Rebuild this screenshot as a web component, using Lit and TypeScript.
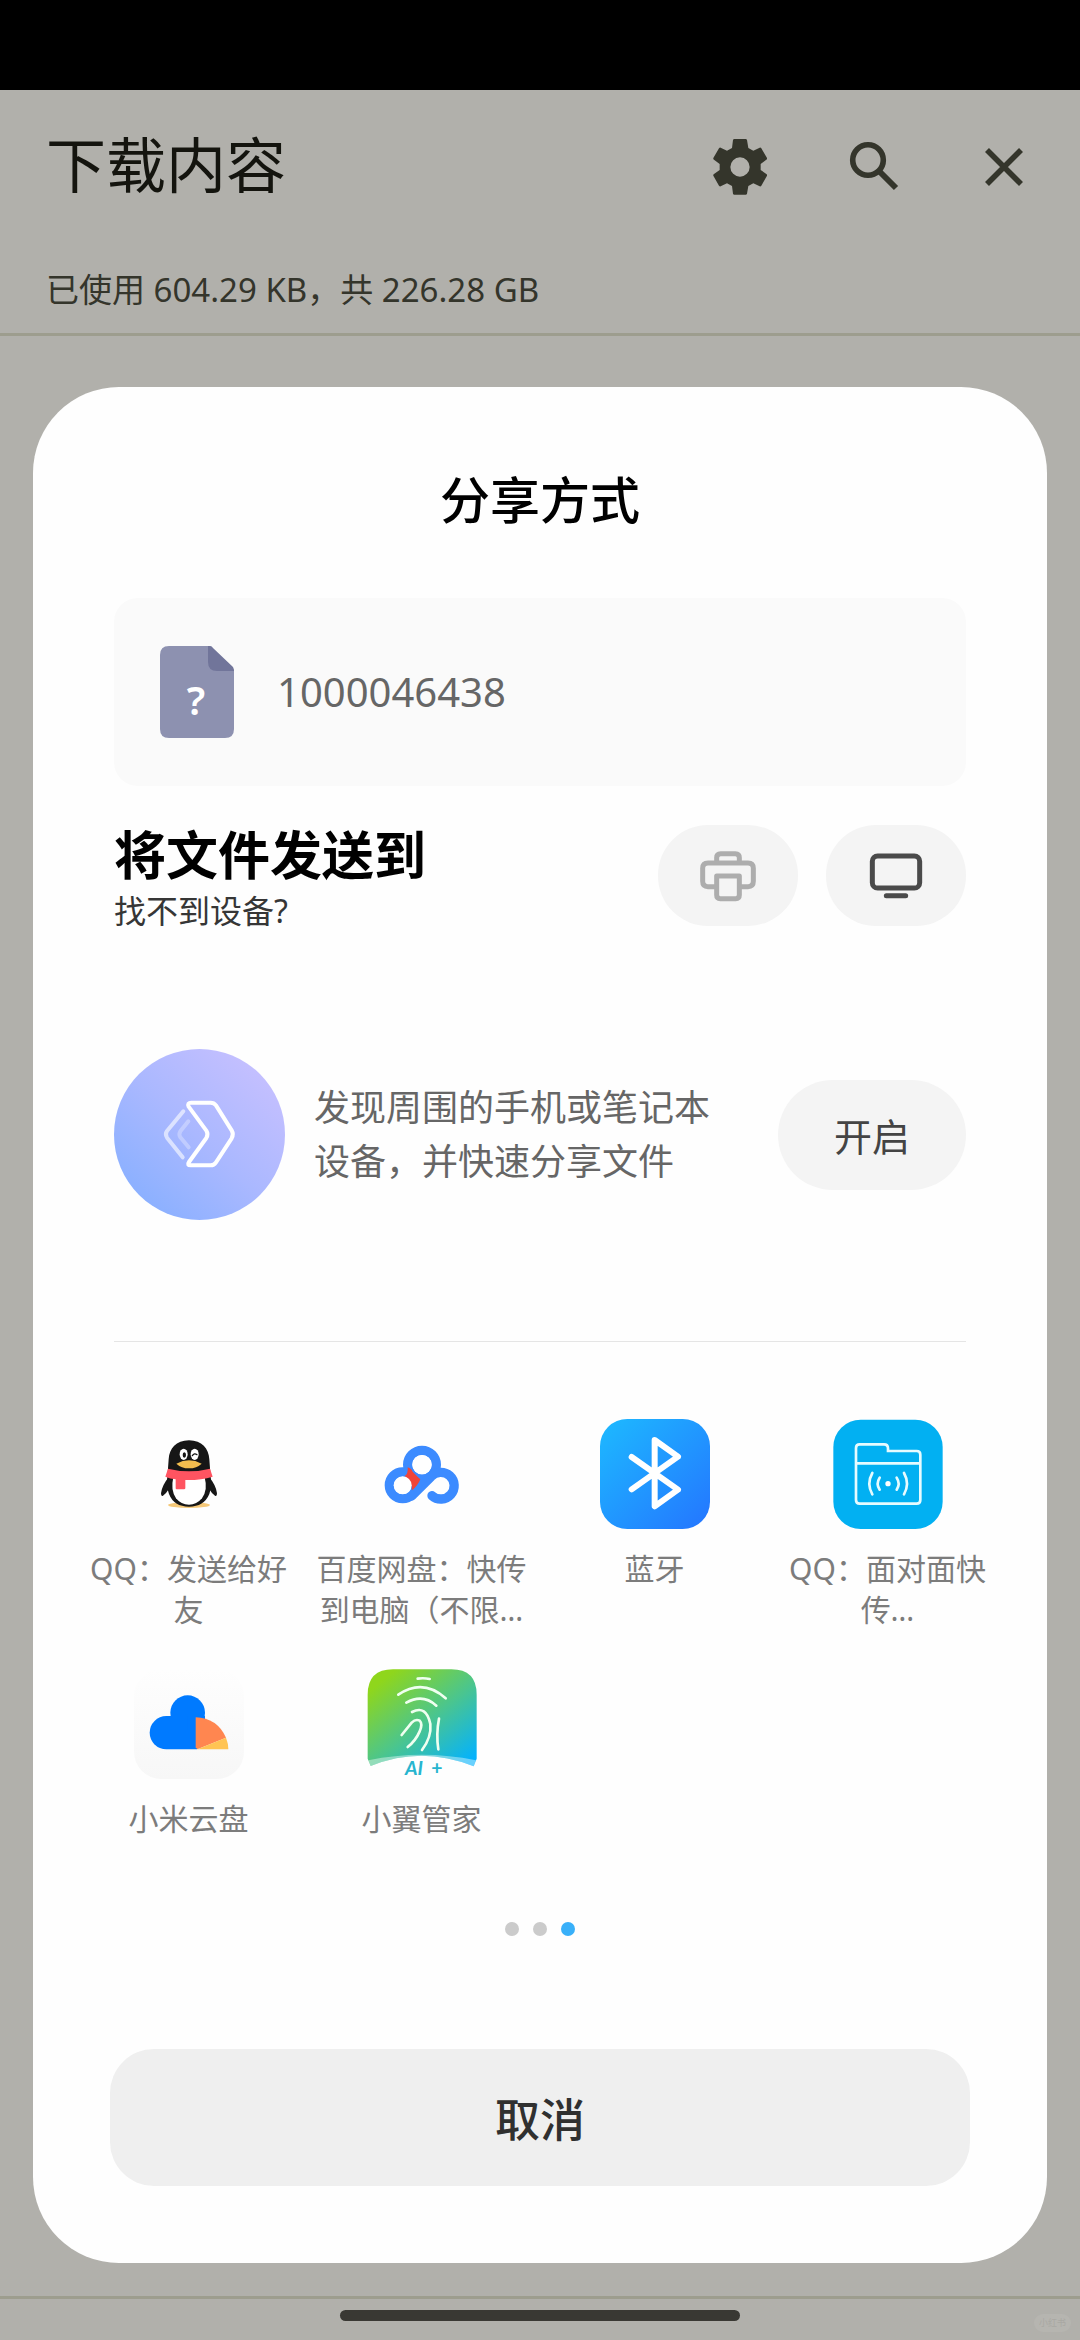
import { LitElement, html, svg, css, TemplateResult } from "lit";
import { customElement, property, state } from "lit/decorators.js";
import { classMap } from "lit/directives/class-map.js";

interface ShareTarget {
  icon: string;
  label: string;
}

const TARGETS: ShareTarget[] = [
  { icon: "qq", label: "QQ：发送给好友" },
  { icon: "netdisk", label: "百度网盘：快传到电脑（不限…" },
  { icon: "bluetooth", label: "蓝牙" },
  { icon: "nearby", label: "QQ：面对面快传…" },
  { icon: "cloud", label: "小米云盘" },
  { icon: "home", label: "小翼管家" },
];

const ICONS: Record<string, { box: string; art: TemplateResult }> = {
  qq: {
    box: "162 87 330 330",
    art: svg`
      <ellipse cx="327" cy="345" rx="63" ry="9" fill="#f5c878"/>
      <path d="M266 262 Q246 286 243 310 Q243 320 249 317 Q258 312 266 298 Z M388 262 Q408 286 411 310 Q411 320 405 317 Q396 312 388 298 Z" fill="#161616"/>
      <path d="M327 151 C366 151 386 176 388 208 L391 248 Q396 290 388 312 Q372 350 327 350 Q282 350 267 312 Q258 290 263 248 L266 208 C268 176 288 151 327 151 Z" fill="#161616"/>
      <path d="M280 262 H374 Q384 300 366 325 Q350 344 327 344 Q303 344 288 325 Q271 300 280 262 Z" fill="#fff"/>
      <path d="M264 236 Q327 252 390 236 L398 260 Q362 271 316 270 V295 Q316 298 312 298 H290 Q287 298 287 295 V268 Q270 266 256 260 Z" fill="#ff5461"/>
      <ellipse cx="311" cy="193" rx="12" ry="17" fill="#fff"/>
      <ellipse cx="344" cy="193" rx="12" ry="17" fill="#fff"/>
      <ellipse cx="313" cy="195" rx="5" ry="8" fill="#161616"/>
      <path d="M337 197 Q343 188 351 194" fill="none" stroke="#161616" stroke-width="4" stroke-linecap="round"/>
      <path d="M289 221 Q308 211 327 211 Q346 211 365 221 Q350 235 327 235 Q304 235 289 221 Z" fill="#f4bd4e"/>`,
  },
  netdisk: {
    box: "862 87 330 330",
    art: svg`
      <g fill="none" stroke="#3c8bff" stroke-width="28">
        <circle cx="1027" cy="224" r="43"/>
        <circle cx="969" cy="286" r="40"/>
        <path d="M996 318 L1054 260 A40 40 0 1 1 1057 317" stroke-linecap="round"/>
      </g>
      <path d="M1010 262 H1050 L1005 310 L985 262 Z" fill="#3c8bff"/>
      <path d="M984 232 Q996 236 998 244 Q1004 252 1022 268 Q1014 288 997 301 Q998 276 975 258 Q986 252 984 232 Z" fill="#f04438"/>
      <circle cx="1027" cy="224" r="29" fill="#fff"/>
      <circle cx="969" cy="286" r="27" fill="#fff"/>`,
  },
  bluetooth: {
    box: "120 87 330 330",
    art: svg`
      <defs><linearGradient id="bt" x1="0" y1="0" x2="1" y2="1">
        <stop offset="0" stop-color="#1dbaff"/><stop offset="1" stop-color="#2475ff"/>
      </linearGradient></defs>
      <rect x="120" y="87" width="330" height="330" rx="82" fill="url(#bt)"/>
      <path d="M215 201 L354 299 L284 349 V150 L354 200 L215 298" fill="none" stroke="#fff" stroke-width="18" stroke-linecap="round" stroke-linejoin="round"/>`,
  },
  nearby: {
    box: "820 87 330 330",
    art: svg`
      <rect x="821" y="89" width="328" height="328" rx="82" fill="#02b0f2"/>
      <g fill="none" stroke="#e6fbff" stroke-width="8" stroke-linecap="round">
        <path d="M889 174 Q889 163 900 163 H973 Q985 163 985 175 V183 H1071 Q1082 183 1082 194 V330 Q1082 341 1071 341 H900 Q889 341 889 330 Z M889 220 H1082"/>
        <path d="M960 263 Q948 281 960 299 M1011 263 Q1023 281 1011 299 M938 249 Q920 281 938 313 M1033 249 Q1051 281 1033 313"/>
      </g>
      <circle cx="985" cy="281" r="8" fill="#fff"/>`,
  },
  cloud: {
    box: "163 57 330 330",
    art: svg`
      <defs><linearGradient id="cl" x1="0" y1="0" x2="0" y2="1">
        <stop offset="0" stop-color="#fefefe"/><stop offset="1" stop-color="#f7f7f7"/>
      </linearGradient></defs>
      <rect x="163" y="57" width="330" height="330" rx="82" fill="url(#cl)"/>
      <circle cx="324" cy="188" r="52" fill="#007aff"/>
      <path d="M260 198 H352 V298 H260 A50 50 0 0 1 260 198 Z" fill="#007aff"/>
      <path d="M324 198 H376 V240 H324 Z" fill="#007aff"/>
      <path d="M348 202 Q412 204 439 263 L353 298 L348 292 Z" fill="#ff8650"/>
      <path d="M439 263 Q446 280 446 298 H353 Z" fill="#ffc453"/>`,
  },
  home: {
    box: "862 57 330 330",
    art: svg`
      <defs><linearGradient id="hm" x1="0.1" y1="0" x2="1" y2="1">
        <stop offset="0.08" stop-color="#8fd61c"/><stop offset="0.52" stop-color="#4ac58f"/><stop offset="0.94" stop-color="#04b2fd"/>
      </linearGradient></defs>
      <path d="M864 134 Q864 58 940 58 H1115 Q1191 58 1191 134 V326 L1182 349 Q1027 286 873 348 L864 326 Z" fill="url(#hm)"/>
      <path d="M866 331 Q1027 298 1189 331 L1182 349 Q1027 286 873 348 Z" fill="#fff" opacity="0.4"/>
      <path d="M1014 86 Q1032 83 1050 87 M956 134 Q1030 84 1098 145 M980 158 Q1030 130 1070 167 M997 186 Q1040 164 1052 222 Q1056 262 1027 300 M966 255 L996 218 Q1008 206 1020 212 Q1030 222 1020 244 Q1008 272 984 291 M1078 206 Q1069 252 1076 298"
        fill="none" stroke="#effff0" stroke-width="8" stroke-linecap="round"/>
      <g font-size="58" font-weight="700" fill="#27b5cf" font-family="Lato, sans-serif">
        <text x="976" y="375" font-style="italic">AI</text>
        <text x="1055" y="374">+</text>
      </g>`,
  },
};

@customElement("share-target")
export class ShareTargetItem extends LitElement {
  @property() icon = "";
  @property() label = "";

  static styles = css`
    :host { display: block; min-width: 0; }
    .target {
      width: 100%;
      display: flex;
      flex-direction: column;
      align-items: center;
      gap: 19px;
      padding: 0;
      border: 0;
      background: none;
      font: inherit;
      color: #7c7c7c;
      cursor: pointer;
    }
    .art { width: 110px; height: 110px; display: block; }
    .label {
      max-width: 218px;
      font-size: 30px;
      line-height: 41px;
      text-align: center;
      line-break: anywhere;
    }
  `;

  render() {
    const icon = ICONS[this.icon];
    return html`
      <button class="target" type="button">
        ${icon ? html`<svg class="art" viewBox=${icon.box} aria-hidden="true">${icon.art}</svg>` : ""}
        <span class="label">${this.label}</span>
      </button>`;
  }
}

@customElement("app-root")
export class AppRoot extends LitElement {
  @state() private page = 2;

  static styles = css`
    :host {
      display: block;
      font-family: "Noto Sans", "Noto Sans CJK SC", sans-serif;
      color: #000;
    }
    * { box-sizing: border-box; }
    button { font: inherit; color: inherit; border: 0; padding: 0; cursor: pointer; }
    h1, h2, h3, p { margin: 0; }
    svg { display: block; }

    .screen {
      min-height: 100vh;
      display: flex;
      flex-direction: column;
      background: #b1b0ab;
    }
    .status { height: 90px; background: #000; }

    .header { border-bottom: 3px solid #9d9d8e; padding: 0 40px 18px 46px; }
    .bar { height: 150px; display: flex; align-items: center; justify-content: space-between; }
    .page-title { font-size: 60px; line-height: 80px; font-weight: 400; color: #14140e; }
    .actions { display: flex; gap: 60px; }
    .action { width: 72px; height: 72px; background: none; color: #34352b; }
    .storage { margin-top: 25px; font-size: 33px; line-height: 50px; color: #34352b; }

    .sheet {
      flex: 1;
      display: flex;
      flex-direction: column;
      margin: 51px 33px 33px;
      padding: 83px 81px 77px;
      border-radius: 86px;
      background: #fefefe;
    }
    .sheet-title { font-size: 50px; line-height: 60px; font-weight: 500; text-align: center; }

    .file {
      margin-top: 68px;
      height: 188px;
      padding: 0 46px;
      display: flex;
      align-items: center;
      gap: 43px;
      border-radius: 24px;
      background: #fafafa;
      font-size: 40px;
      line-height: 56px;
      color: #666;
    }
    .file-icon { width: 74px; height: 92px; }

    .send { margin-top: 39px; display: flex; align-items: flex-start; justify-content: space-between; }
    .send-title { font-size: 52px; line-height: 60px; font-weight: 700; }
    .help { display: block; font-size: 32px; line-height: 52px; color: #363636; text-decoration: none; }
    .devices { display: flex; gap: 28px; }
    .device {
      width: 140px;
      height: 101px;
      display: flex;
      align-items: center;
      justify-content: center;
      border-radius: 50px;
      background: #f4f4f4;
    }
    .device svg { width: 60px; height: 54px; }

    .promo { margin-top: 112px; display: flex; align-items: center; gap: 29px; }
    .promo-art { width: 171px; height: 171px; flex: none; }
    .promo-text { flex: 0 1 400px; font-size: 36px; line-height: 54px; color: #666; }
    .enable {
      margin-left: auto;
      width: 188px;
      height: 110px;
      flex: none;
      border-radius: 55px;
      background: #f4f4f4;
      font-size: 38px;
      color: #444;
    }

    .rule { width: 100%; height: 1px; margin: 121px 0 77px; border: 0; background: #e5e5e5; }

    .targets {
      margin: 0 -38px 0 -42px;
      display: grid;
      grid-template-columns: repeat(4, 1fr);
      row-gap: 39px;
    }

    .dots { margin-top: 83px; display: flex; justify-content: center; gap: 14px; }
    .dot { width: 14px; height: 14px; border-radius: 50%; background: #cbcbcb; }
    .dot.current { background: #39b0f9; }

    .cancel {
      margin: auto -4px 0;
      height: 137px;
      border-radius: 44px;
      background: #efefef;
      font-size: 45px;
      font-weight: 500;
      color: #303030;
    }

    .footer {
      position: relative;
      height: 44px;
      padding-top: 11px;
      border-top: 3px solid #9d9d8e;
    }
    .home { width: 37%; height: 11px; margin: 0 auto; border-radius: 6px; background: #393833; }
    .mark {
      position: absolute;
      right: 9px;
      bottom: 8px;
      padding: 0 5px;
      border-radius: 9px;
      background: #b6b5b0;
      color: #a9a8a3;
      font-size: 9px;
      line-height: 18px;
    }
  `;

  render() {
    return html`
      <div class="screen">
        <div class="status"></div>
        <header class="header">
          <div class="bar">
            <h1 class="page-title">下载内容</h1>
            <div class="actions">
              <button class="action" type="button" aria-label="设置">
                <svg viewBox="129 57 216 216" fill="currentColor" fill-rule="evenodd">
                  <path d="M220 87 H254 Q257 87 258 90 L262 114 L277 122 L296 113 Q299 112 301 115 L318 144 Q319 147 316 149 L299 162 V180 L316 192 Q319 194 318 197 L301 227 Q299 230 296 229 L277 220 L262 228 L258 251 Q257 254 254 254 H220 Q217 254 216 251 L213 228 L198 220 L179 229 Q176 230 174 227 L157 197 Q156 194 159 192 L176 180 V162 L159 149 Q156 147 157 144 L174 115 Q176 112 179 113 L198 122 L213 114 L216 90 Q217 87 220 87 Z M237 142 A29 29 0 1 0 237 200 A29 29 0 1 0 237 142 Z"/>
                </svg>
              </button>
              <button class="action" type="button" aria-label="搜索">
                <svg viewBox="0 0 72 72" fill="none" stroke="currentColor">
                  <circle cx="32" cy="31" r="15.3" stroke-width="5.6"/>
                  <path d="M44 43 L60 59" stroke-width="6"/>
                </svg>
              </button>
              <button class="action" type="button" aria-label="关闭">
                <svg viewBox="0 0 72 72" fill="none" stroke="currentColor" stroke-width="5.6">
                  <path d="M19 21 L53 55 M53 21 L19 55"/>
                </svg>
              </button>
            </div>
          </div>
          <p class="storage">已使用 604.29 KB，共 226.28 GB</p>
        </header>

        <main class="sheet">
          <h2 class="sheet-title">分享方式</h2>

          <div class="file">
            <svg class="file-icon" viewBox="0 0 74 92" aria-hidden="true">
              <path d="M9 0 H50 L74 24 V83 Q74 92 65 92 H9 Q0 92 0 83 V9 Q0 0 9 0 Z" fill="#8d91b0"/>
              <path d="M48 0 H50 Q52 0 53 2 L73 21 Q74 23 74 25 H57 Q48 25 48 16 Z" fill="#71759a"/>
              <text x="36" y="69" text-anchor="middle" font-size="40" font-weight="600" fill="#fff">?</text>
            </svg>
            <span>1000046438</span>
          </div>

          <section class="send">
            <div>
              <h3 class="send-title">将文件发送到</h3>
              <a class="help" href="#help">找不到设备?</a>
            </div>
            <div class="devices">
              <button class="device" type="button" aria-label="打印">
                <svg viewBox="414 866 180 162" fill="none" stroke="#adadad" stroke-width="15">
                  <path d="M470 905 V892 Q470 880 482 880 H526 Q538 880 538 892 V905"/>
                  <path d="M470 979 H444 Q428 979 428 963 V924 Q428 908 444 908 H564 Q580 908 580 924 V963 Q580 979 564 979 H538"/>
                  <path d="M470 947 H538 V1004 Q538 1015 527 1015 H481 Q470 1015 470 1004 Z" stroke-linejoin="round"/>
                </svg>
              </button>
              <button class="device" type="button" aria-label="投屏">
                <svg viewBox="918 866 180 162" fill="none" stroke="#4a4a4a" stroke-width="15">
                  <rect x="937" y="887" width="142" height="96" rx="16"/>
                  <path d="M979 1006 H1037" stroke-linecap="round"/>
                </svg>
              </button>
            </div>
          </section>

          <section class="promo">
            <svg class="promo-art" viewBox="42 87 513 513" aria-hidden="true">
              <defs>
                <linearGradient id="promo" x1="0.15" y1="0.9" x2="0.85" y2="0.15">
                  <stop offset="0" stop-color="#8ab0ff"/>
                  <stop offset="0.5" stop-color="#aab8ff"/>
                  <stop offset="1" stop-color="#c3bfff"/>
                </linearGradient>
              </defs>
              <circle cx="298.5" cy="343.5" r="256.5" fill="url(#promo)"/>
              <g fill="none" stroke="#fff" stroke-width="12" stroke-linecap="round" stroke-linejoin="round">
                <path d="M274 248 H332 Q342 248 348 256 L395 331 Q402 343 395 355 L348 427 Q342 436 332 436 H272 Q260 436 267 426 L319 354 Q326 343 319 332 L266 260 Q261 248 274 248 Z"/>
                <path d="M250 274 L201 333 Q194 343 201 353 L248 412" opacity="0.6"/>
                <path d="M265 304 L241 334 Q235 343 241 352 L266 382" opacity="0.3"/>
              </g>
            </svg>
            <p class="promo-text">发现周围的手机或笔记本设备，并快速分享文件</p>
            <button class="enable" type="button">开启</button>
          </section>

          <hr class="rule" />

          <div class="targets">
            ${TARGETS.map((t) => html`<share-target .icon=${t.icon} .label=${t.label}></share-target>`)}
          </div>

          <div class="dots">
            ${[0, 1, 2].map(
              (i) => html`<button
                type="button"
                class=${classMap({ dot: true, current: i === this.page })}
                aria-label=${`第 ${i + 1} 页`}
                @click=${() => (this.page = i)}
              ></button>`
            )}
          </div>

          <button class="cancel" type="button">取消</button>
        </main>

        <footer class="footer">
          <div class="home"></div>
          <span class="mark">小红书</span>
        </footer>
      </div>
    `;
  }
}
